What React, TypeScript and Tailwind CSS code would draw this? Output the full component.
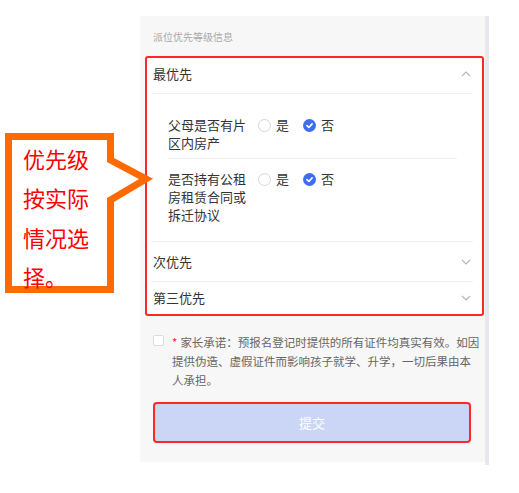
import React from "react";

const Chevron = ({ up }: { up?: boolean }) => (
  <svg width="10" height="6" viewBox="0 0 10 6" fill="none">
    {up ? (
      <polyline points="1,5 5,1 9,5" stroke="#b4b4b4" strokeWidth="1.1" />
    ) : (
      <polyline points="1,1 5,5 9,1" stroke="#b4b4b4" strokeWidth="1.1" />
    )}
  </svg>
);

const RadioPair = () => (
  <div className="flex items-center h-[18px] text-[13px] text-[#333]">
    <span className="w-[13px] h-[13px] rounded-full border border-[#d6d6d6] bg-white" />
    <span className="ml-[5px]">是</span>
    <span className="ml-[14px] w-[13px] h-[13px] rounded-full bg-[#3f6df2] flex items-center justify-center">
      <svg width="9" height="9" viewBox="0 0 10 10" fill="none">
        <polyline points="2.2,5.2 4.3,7.2 7.9,3.2" stroke="#fff" strokeWidth="1.8" strokeLinecap="round" strokeLinejoin="round" />
      </svg>
    </span>
    <span className="ml-[5px]">否</span>
  </div>
);

export default function App() {
  return (
    <div className="relative w-[519px] h-[493px] bg-white overflow-hidden font-['Noto_Sans_CJK_SC','Noto_Sans',sans-serif]">
      <div className="flex ml-[140px] pt-[16px]">
        <div className="w-[345px] h-[446px] bg-[#f7f7f7] flex flex-col">
          <div className="h-[40px] pl-[13px] flex items-center text-[10px] text-[#a8a8a8]">
            派位优先等级信息
          </div>
          <div className="ml-[5px] mr-[1px] border-2 border-[#ff2626] rounded-[3px] bg-white flex flex-col">
            <div className="h-[35px] pb-[3px] pl-[6px] pr-[11px] flex items-center justify-between text-[13px] text-[#333]">
              <span>最优先</span>
              <Chevron up />
            </div>
            <div className="h-px bg-[#f1f1f1] ml-[4px] mr-[9px]" />
            <div className="pl-[21px] flex flex-col">
              <div className="pt-[22px] pb-[6px] flex items-start">
                <div className="w-[80px] text-[13px] leading-[18px] text-[#333]">父母是否有片区内房产</div>
                <div className="ml-[10px]">
                  <RadioPair />
                </div>
              </div>
              <div className="h-px bg-[#f2f2f2] mr-[25px]" />
              <div className="pt-[11px] pb-[17px] flex items-start">
                <div className="w-[80px] text-[13px] leading-[18px] text-[#333]">是否持有公租房租赁合同或拆迁协议</div>
                <div className="ml-[10px]">
                  <RadioPair />
                </div>
              </div>
            </div>
            <div className="h-px bg-[#f1f1f1] ml-[4px] mr-[9px]" />
            <div className="h-[39px] pl-[6px] pr-[11px] flex items-center justify-between text-[13px] text-[#333]">
              <span>次优先</span>
              <Chevron />
            </div>
            <div className="h-px bg-[#f1f1f1] ml-[4px] mr-[9px]" />
            <div className="h-[32px] pl-[6px] pr-[11px] flex items-center justify-between text-[13px] text-[#333]">
              <span>第三优先</span>
              <Chevron />
            </div>
          </div>
          <div className="mt-[17px] pl-[13px] flex items-start">
            <span className="mt-[2px] w-[11px] h-[11px] border border-[#dcdcdc] rounded-[2px] bg-white shrink-0" />
            <p className="ml-[8px] w-[310px] text-[11.5px] leading-[19px] text-[#666]">
              <span className="inline-block mr-[3px] text-[#f5222d]">*</span>家长承诺：预报名登记时提供的所有证件均真实有效。如因提供伪造、虚假证件而影响孩子就学、升学，一切后果由本人承担。
            </p>
          </div>
          <div className="mt-[12px] ml-[13px] w-[318px] h-[41px] border-2 border-[#ff2626] rounded-[4px] bg-[#cbd6f6] flex items-center justify-center text-[13px] text-white">
            提交
          </div>
        </div>
        <div className="w-[4px] h-[449px] bg-[#e6e8ee]" />
      </div>

      <svg className="absolute left-0 top-0" width="160" height="300" viewBox="0 0 160 300">
        <path
          d="M8.5 136.5 H110.5 V160 L146 179 L110.5 200 V289.5 H8.5 Z"
          fill="#ffffff"
          stroke="#ff6a00"
          strokeWidth="7"
          strokeLinejoin="miter"
        />
      </svg>
      <div className="absolute left-[23px] top-[139px] w-[68px] text-[22px] leading-[39.3px] text-[#ff0000]">
        优先级按实际情况选择。
      </div>
    </div>
  );
}
